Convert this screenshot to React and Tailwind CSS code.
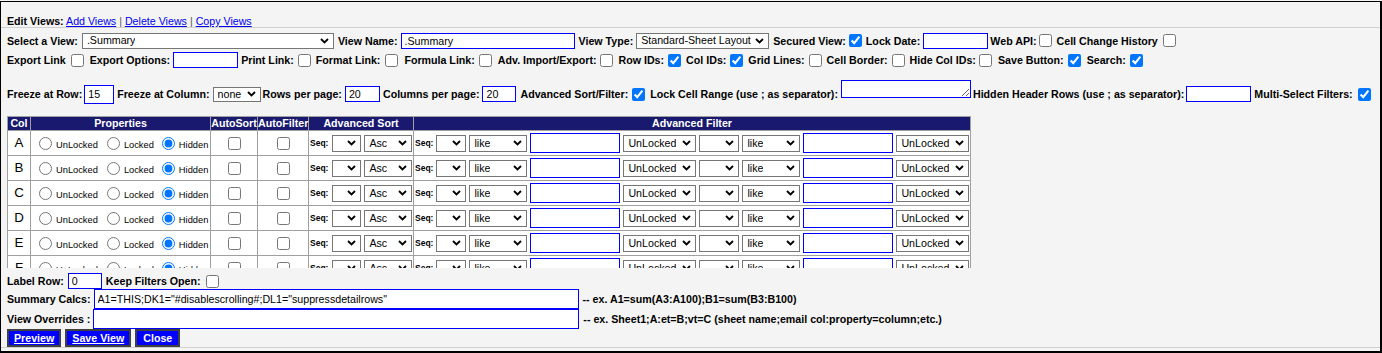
function Chevron() {
  return (
    <svg width="9" height="6" viewBox="0 0 9 6" className="shrink-0">
      <path d="M1 1l3.5 3.5L8 1" fill="none" stroke="#000" strokeWidth="1.8" />
    </svg>
  );
}

function Select({ value = "", w, h = "h-[17px]" }) {
  return (
    <div
      className={`flex shrink-0 items-center justify-between border border-[#767676] bg-white pl-[4px] pr-[4px] leading-none ${w} ${h}`}
    >
      <span className="truncate">{value}</span>
      <Chevron />
    </div>
  );
}

function TextBox({ value = "", w, h = "h-[16px]" }) {
  return (
    <input
      readOnly
      defaultValue={value}
      className={`shrink-0 border border-[#0000ff] bg-white px-[3px] leading-none outline-none ${w} ${h}`}
    />
  );
}

function Check({ on = false, className = "" }) {
  return <input type="checkbox" defaultChecked={on} className={`h-[13px] w-[13px] shrink-0 ${className}`} />;
}

function B({ children, className = "" }) {
  return <span className={`shrink-0 whitespace-nowrap font-bold ${className}`}>{children}</span>;
}

const cell = "border border-[#a0a0a0] p-0";

function Row({ letter }) {
  return (
    <tr className="bg-white">
      <td className={`${cell} h-[25px] text-center text-[13.33px]`}>{letter}</td>
      <td className={cell}>
        <div className="flex items-center pl-[8px] text-[9.3px]">
          <input type="radio" name={`p${letter}`} className="h-[13px] w-[13px] shrink-0" />
          <span className="ml-[4px] mt-[6px]">UnLocked</span>
          <input type="radio" name={`p${letter}`} className="ml-[9px] h-[13px] w-[13px] shrink-0" />
          <span className="ml-[4px] mt-[6px]">Locked</span>
          <input type="radio" name={`p${letter}`} defaultChecked className="ml-[8px] h-[13px] w-[13px] shrink-0" />
          <span className="ml-[4px] mt-[6px]">Hidden</span>
        </div>
      </td>
      <td className={`${cell} text-center`}>
        <div className="flex justify-center">
          <Check />
        </div>
      </td>
      <td className={`${cell} text-center`}>
        <div className="flex justify-center">
          <Check />
        </div>
      </td>
      <td className={cell}>
        <div className="flex items-center pl-[1px]">
          <span className="text-[8.5px] font-bold">Seq:</span>
          <Select w="ml-[4px] w-[29px]" h="h-[17px]" />
          <Select value="Asc" w="ml-[3px] w-[48px]" h="h-[17px]" />
        </div>
      </td>
      <td className={cell}>
        <div className="flex items-center gap-[3px] pl-[1px]">
          <span className="text-[8.5px] font-bold">Seq:</span>
          <Select w="w-[30px]" />
          <Select value="like" w="w-[58px]" />
          <TextBox w="w-[90px]" h="h-[20px]" />
          <Select value="UnLocked" w="w-[73px]" />
          <Select w="w-[40px]" />
          <Select value="like" w="w-[58px]" />
          <TextBox w="w-[90px]" h="h-[20px]" />
          <Select value="UnLocked" w="w-[73px]" />
        </div>
      </td>
    </tr>
  );
}

export default function App() {
  const th = "border border-[#a0a0a0] p-0 h-[13px] leading-[13px] font-bold whitespace-nowrap";
  return (
    <div className="h-[353px] w-[1382px] overflow-hidden bg-[#f4f4f4] font-['Liberation_Sans',Arial,sans-serif] text-[10.67px] text-black">
      <div className="mt-px h-[352px] border-b-2 border-l border-r-2 border-t border-black bg-[#f4f4f4]">
        <div className="h-[26px] border-b border-[#d0d0d0] px-[6px] pt-[13px] leading-[12px] whitespace-nowrap">
          <span className="font-bold">Edit Views:</span>{" "}
          <a href="#" className="text-[#0000ee] underline">Add Views</a>{" "}
          <span className="text-[#555]">|</span>{" "}
          <a href="#" className="text-[#0000ee] underline">Delete Views</a>{" "}
          <span className="text-[#555]">|</span>{" "}
          <a href="#" className="text-[#0000ee] underline">Copy Views</a>
        </div>

        <div className="mt-[4px] flex h-[17px] items-center px-[6px]">
          <B>Select a View:</B>
          <Select value=".Summary" w="ml-[4px] w-[252px]" h="h-[16px]" />
          <B className="ml-[4px]">View Name:</B>
          <TextBox value=".Summary" w="ml-[3px] w-[174px]" />
          <B className="ml-[4px]">View Type:</B>
          <Select value="Standard-Sheet Layout" w="ml-[3px] w-[133px]" h="h-[16px]" />
          <B className="ml-[4px]">Secured View:</B>
          <Check on className="ml-[3px]" />
          <B className="ml-[4px]">Lock Date:</B>
          <TextBox w="ml-[3px] w-[65px]" />
          <B className="ml-[2px]">Web API:</B>
          <Check className="ml-[2px]" />
          <B className="ml-[5px]">Cell Change History</B>
          <Check className="ml-[5px]" />
        </div>

        <div className="mt-[3px] flex h-[16px] items-center px-[6px]">
          <B>Export Link</B>
          <Check className="ml-[5px]" />
          <B className="ml-[6px]">Export Options:</B>
          <TextBox w="ml-[3px] w-[65px]" />
          <B className="ml-[3px]">Print Link:</B>
          <Check className="ml-[4px]" />
          <B className="ml-[5px]">Format Link:</B>
          <Check className="ml-[5px]" />
          <B className="ml-[6px]">Formula Link:</B>
          <Check className="ml-[4px]" />
          <B className="ml-[6px]">Adv. Import/Export:</B>
          <Check className="ml-[3px]" />
          <B className="ml-[6px]">Row IDs:</B>
          <Check on className="ml-[4px]" />
          <B className="ml-[5px]">Col IDs:</B>
          <Check on className="ml-[4px]" />
          <B className="ml-[5px]">Grid Lines:</B>
          <Check className="ml-[4px]" />
          <B className="ml-[5px]">Cell Border:</B>
          <Check className="ml-[4px]" />
          <B className="ml-[5px]">Hide Col IDs:</B>
          <Check className="ml-[3px]" />
          <B className="ml-[6px]">Save Button:</B>
          <Check on className="ml-[4px]" />
          <B className="ml-[6px]">Search:</B>
          <Check on className="ml-[4px]" />
        </div>

        <div className="mt-[12px] flex h-[28px] items-center px-[6px]">
          <B>Freeze at Row:</B>
          <TextBox value="15" w="ml-[2px] w-[30px]" h="h-[19px]" />
          <B className="ml-[3px]">Freeze at Column:</B>
          <Select value="none" w="ml-[3px] w-[48px]" h="h-[15px]" />
          <B className="ml-[2px]">Rows per page:</B>
          <TextBox value="20" w="ml-[3px] w-[35px]" />
          <B className="ml-[3px]">Columns per page:</B>
          <TextBox value="20" w="ml-[3px] w-[34px]" />
          <B className="ml-[4px]">Advanced Sort/Filter:</B>
          <Check on className="ml-[4px]" />
          <B className="ml-[5px]">Lock Cell Range (use ; as separator):</B>
          <textarea
            readOnly
            rows={1}
            className="ml-[3px] h-[18px] w-[130px] shrink-0 self-start border border-[#0000ff] bg-white p-[2px] outline-none"
          />
          <B className="ml-[2px]">Hidden Header Rows (use ; as separator):</B>
          <TextBox w="ml-[2px] w-[65px]" />
          <B className="ml-[3px]">Multi-Select Filters:</B>
          <Check on className="ml-[5px]" />
        </div>

        <div className="mt-[8px] h-[152px] overflow-hidden px-[6px]">
          <table className="w-[963px] table-fixed border-collapse">
            <colgroup>
              <col className="w-[23px]" />
              <col className="w-[180px]" />
              <col className="w-[47px]" />
              <col className="w-[51px]" />
              <col className="w-[105px]" />
              <col className="w-[557px]" />
            </colgroup>
            <thead>
              <tr className="bg-[#191970] text-white">
                <th className={th}>Col</th>
                <th className={th}>Properties</th>
                <th className={th}>AutoSort</th>
                <th className={th}>AutoFilter</th>
                <th className={th}>Advanced Sort</th>
                <th className={th}>Advanced Filter</th>
              </tr>
            </thead>
            <tbody>
              {["A", "B", "C", "D", "E", "F"].map((l) => (
                <Row key={l} letter={l} />
              ))}
            </tbody>
          </table>
        </div>

        <div className="mt-[5px] flex h-[16px] items-center px-[6px]">
          <B>Label Row:</B>
          <TextBox value="0" w="ml-[4px] w-[34px]" />
          <B className="ml-[4px]">Keep Filters Open:</B>
          <Check className="ml-[5px]" />
        </div>
        <div className="flex h-[20px] items-center px-[6px]">
          <B>Summary Calcs:</B>
          <TextBox
            value={'A1=THIS;DK1="#disablescrolling#;DL1="suppressdetailrows"'}
            w="ml-[3px] w-[485px]"
            h="h-[20px]"
          />
          <B className="ml-[4px]">-- ex. A1=sum(A3:A100);B1=sum(B3:B100)</B>
        </div>
        <div className="flex h-[20px] items-center px-[6px]">
          <B>View Overrides :</B>
          <TextBox w="ml-[3px] w-[486px]" h="h-[20px]" />
          <B className="ml-[4px]">-- ex. Sheet1;A:et=B;vt=C (sheet name;email col:property=column;etc.)</B>
        </div>
        <div className="flex h-[18px] gap-[4px] px-[6px]">
          <button className="border-2 border-[#404040] bg-[#0000ff] px-[5px] font-bold leading-none text-white underline">
            Preview
          </button>
          <button className="border-2 border-[#404040] bg-[#0000ff] px-[5px] font-bold leading-none text-white underline">
            Save View
          </button>
          <button className="border-2 border-[#404040] bg-[#0000ff] px-[6px] font-bold leading-none text-white">
            Close
          </button>
        </div>
        <div className="h-px bg-[#d0d0d0]" />
      </div>
    </div>
  );
}
